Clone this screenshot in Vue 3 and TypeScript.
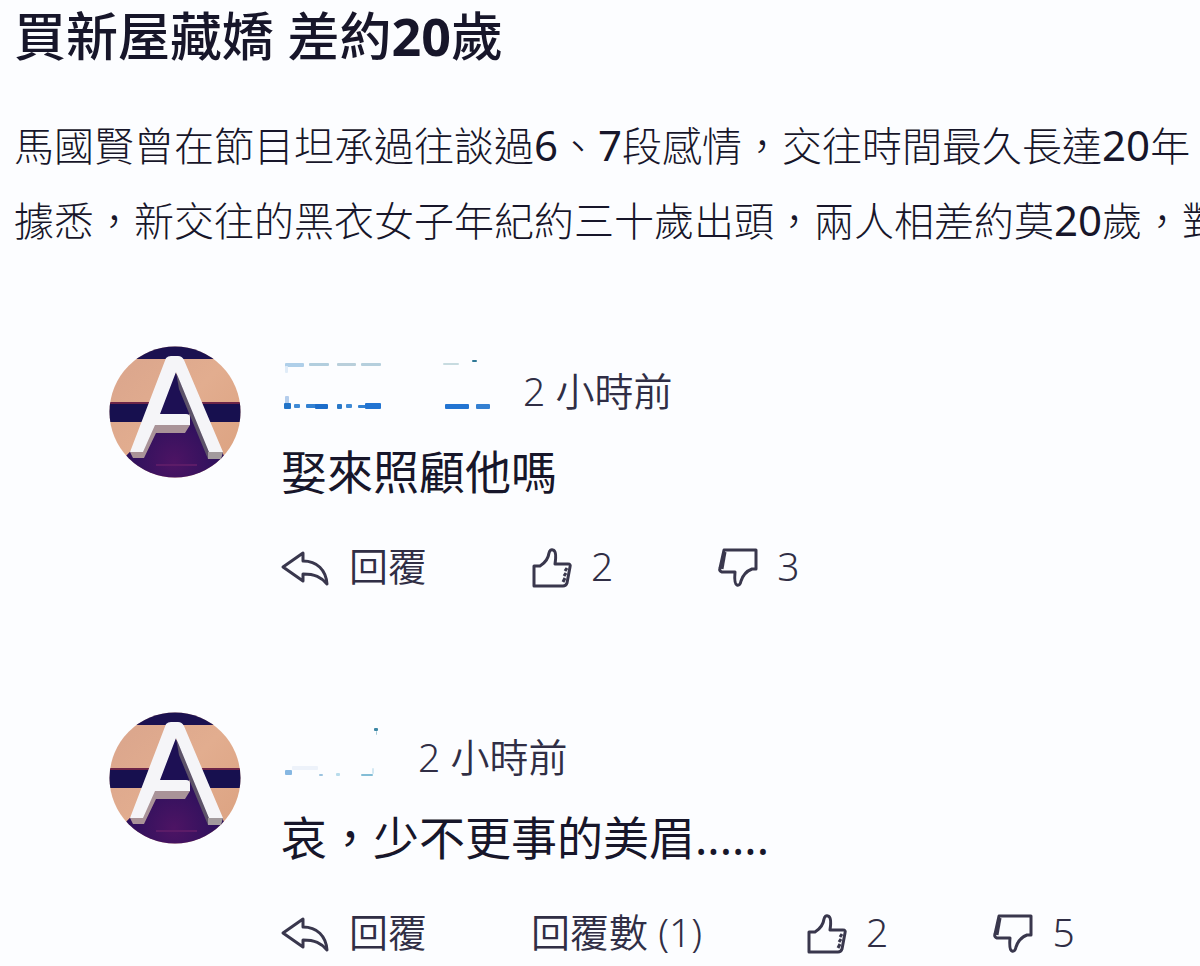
<script setup lang="ts">
interface Mark { x: number; y: number; w: number; h: number; c: string }
interface Comment {
  id: number
  time: string
  text: string
  replies: number
  up: number
  down: number
  maskWidth: number
  marks: Mark[]
}

const comments: Comment[] = [
  {
    id: 1,
    time: '2 小時前',
    text: '娶來照顧他嗎',
    replies: 0,
    up: 2,
    down: 3,
    maskWidth: 216,
    marks: [
      { x: 4, y: 9, w: 19, h: 4, c: '#afcfe9' },
      { x: 4, y: 12, w: 3, h: 7, c: '#e0ecf8' },
      { x: 28, y: 9, w: 20, h: 3, c: '#b2cede' },
      { x: 56, y: 9, w: 19, h: 3, c: '#b9cfdb' },
      { x: 80, y: 9, w: 20, h: 3, c: '#b5cfdd' },
      { x: 162, y: 9, w: 16, h: 2, c: '#c7dbe0' },
      { x: 191, y: 6, w: 5, h: 2, c: '#2f7896' },
      { x: 4, y: 42, w: 4, h: 8, c: '#b4cdec' },
      { x: 3, y: 49, w: 7, h: 6, c: '#2274c8' },
      { x: 13, y: 50, w: 6, h: 4, c: '#408bd6' },
      { x: 25, y: 50, w: 12, h: 4, c: '#3281d2' },
      { x: 34, y: 50, w: 13, h: 5, c: '#1c6dca' },
      { x: 56, y: 50, w: 5, h: 5, c: '#2878c8' },
      { x: 65, y: 50, w: 6, h: 4, c: '#408bd6' },
      { x: 77, y: 51, w: 12, h: 3, c: '#3281d2' },
      { x: 84, y: 49, w: 16, h: 6, c: '#2274d2' },
      { x: 164, y: 50, w: 24, h: 5, c: '#2274d2' },
      { x: 195, y: 50, w: 14, h: 5, c: '#3480d2' },
    ],
  },
  {
    id: 2,
    time: '2 小時前',
    text: '哀，少不更事的美眉......',
    replies: 1,
    up: 2,
    down: 5,
    maskWidth: 111,
    marks: [
      { x: 93, y: 8, w: 4, h: 3, c: '#3d87a5' },
      { x: 95, y: 11, w: 1, h: 4, c: '#a9cbd8' },
      { x: 4, y: 50, w: 7, h: 5, c: '#86b7e2' },
      { x: 11, y: 46, w: 26, h: 4, c: '#edf2fa' },
      { x: 38, y: 54, w: 4, h: 2, c: '#9cc3df' },
      { x: 55, y: 53, w: 4, h: 3, c: '#b9dcec' },
      { x: 80, y: 54, w: 12, h: 2, c: '#83bdd6' },
      { x: 91, y: 48, w: 2, h: 6, c: '#d3e8f3' },
    ],
  },
]
</script>

<template>
  <main class="page">
    <article class="story">
      <h1>買新屋藏嬌 差約<b>20</b>歲</h1>
      <p>馬國賢曾在節目坦承過往談過<span class="num">6</span>、<span class="num">7</span>段感情，交往時間最久長達<span class="num">20</span>年</p>
      <p>據悉，新交往的黑衣女子年紀約三十歲出頭，兩人相差約莫<span class="num">20</span>歲，對</p>
    </article>

    <section class="comments">
      <article v-for="c in comments" :key="c.id" class="comment">
        <svg class="avatar" viewBox="0 0 132 132" aria-hidden="true">
          <defs>
            <clipPath :id="`disc-${c.id}`"><circle cx="66" cy="66" r="65.5" /></clipPath>
            <linearGradient :id="`wood-${c.id}`" x1="0" x2="1" y1="0" y2="1">
              <stop offset="0" stop-color="#d9a48c" />
              <stop offset="0.5" stop-color="#e2ad8f" />
              <stop offset="1" stop-color="#dba17f" />
            </linearGradient>
            <radialGradient :id="`floor-${c.id}`" cx="0.5" cy="0.85" r="0.6">
              <stop offset="0" stop-color="#4d1464" />
              <stop offset="1" stop-color="#22105a" />
            </radialGradient>
          </defs>
          <g :clip-path="`url(#disc-${c.id})`">
            <rect width="132" height="132" :fill="`url(#wood-${c.id})`" />
            <rect width="132" height="13" fill="#1b1150" />
            <rect y="57" width="132" height="19" fill="#17104f" />
            <path d="M0 57H132" stroke="#6c2447" stroke-width="2" />
            <path d="M66 26L42 84L14 113L28 132H116L116 112L96 70Z" :fill="`url(#floor-${c.id})`" />
            <path d="M47 119H88" stroke="#5c1c68" stroke-width="2" />
            <path d="M21 106L24 112L35 112L47 87H76L81 79V68L52 69Z" fill="#a99398" />
            <path d="M66 26L51 69H80Z" fill="#1d1054" />
            <path d="M67 26L70 43L99 113L102 106Z" fill="#5d5369" />
            <path d="M99 106L99 113H112L114 106Z" fill="#a29a9d" />
            <path fill="#f5f5f8" d="M57 12Q59 10 62 10H69Q73 10 75 14L114 106H100L67 26L51 68H77Q81 68 81 72V79H46L34 106H21Z" />
          </g>
        </svg>

        <div class="body">
          <header class="meta">
            <svg class="name" :width="c.maskWidth" height="60" aria-hidden="true">
              <rect
                v-for="(m, i) in c.marks"
                :key="i"
                :x="m.x"
                :y="m.y"
                :width="m.w"
                :height="m.h"
                :fill="m.c"
                rx="1"
              />
            </svg>
            <time>{{ c.time }}</time>
          </header>
          <p class="text">{{ c.text }}</p>
          <footer class="actions">
            <button type="button" class="reply">
              <svg width="48" height="36" viewBox="0 0 48 36" aria-hidden="true">
                <path d="M2 17L22 3V11C36 11 45 20 46 34C40 27 34 24 22 24V31Z" />
              </svg>
              <span>回覆</span>
            </button>
            <button v-if="c.replies" type="button" class="thread">回覆數 ({{ c.replies }})</button>
            <button type="button" class="vote">
              <svg width="42" height="42" viewBox="0 0 42 42" aria-hidden="true">
                <path d="M3 19H9Q17 14 18 6Q19 2 22 3Q26 4 24 17H37Q40 17 39 20L36 36Q35 39 32 39H3Z" />
                <path d="M36 21L34 24M35 26L33 29M34 31L32 35" />
              </svg>
              <span>{{ c.up }}</span>
            </button>
            <button type="button" class="vote">
              <svg width="42" height="42" viewBox="0 0 42 42" aria-hidden="true">
                <path d="M7 3H39V22H35Q27 25 24 34Q23 39 20 38Q17 37 18 25H5Q2 24 3 21Z" />
                <path d="M8 5L5 22" />
              </svg>
              <span>{{ c.down }}</span>
            </button>
          </footer>
        </div>
      </article>
    </section>
  </main>
</template>

<style>
html,
body {
  background: #fcfdff;
}
</style>

<style scoped>
.page {
  overflow: hidden;
  color: #17162a;
  font-family: "Noto Sans", "Noto Sans CJK TC", sans-serif;
}
.story {
  padding-left: 14px;
  white-space: nowrap;
}
h1 {
  margin: 0 0 36px;
  font-size: 52px;
  line-height: 72px;
  font-weight: 500;
}
h1 b {
  font-weight: 700;
}
.story p {
  margin: 0;
  font-size: 40px;
  line-height: 74px;
  font-weight: 300;
}
.story .num {
  font-size: 42px;
  font-weight: 400;
}
.comments {
  display: flex;
  flex-direction: column;
  gap: 116px;
  padding: 88px 0 0 109px;
}
.comment {
  display: flex;
  align-items: flex-start;
  gap: 40px;
}
.avatar {
  flex: none;
  width: 132px;
  height: 132px;
}
.body {
  flex: 1;
}
.meta {
  display: flex;
  align-items: center;
  height: 60px;
  margin-top: 8px;
  gap: 26px;
}
time {
  margin-top: 14px;
  font-size: 39px;
  line-height: 60px;
  font-weight: 350;
  color: #302e45;
}
.text {
  margin: 24px 0 0;
  font-size: 46px;
  line-height: 66px;
}
.actions {
  display: flex;
  align-items: center;
  height: 60px;
  margin-top: 32px;
  gap: 104px;
}
button {
  display: flex;
  align-items: center;
  padding: 0;
  border: 0;
  background: none;
  font: inherit;
  font-size: 39px;
  line-height: 60px;
  font-weight: 350;
  color: #302e45;
  white-space: nowrap;
  cursor: pointer;
}
.reply {
  gap: 20px;
}
.vote {
  gap: 18px;
}
button svg {
  margin-top: 4px;
  fill: none;
  stroke: #39374d;
  stroke-width: 3;
  stroke-linejoin: round;
}
</style>
